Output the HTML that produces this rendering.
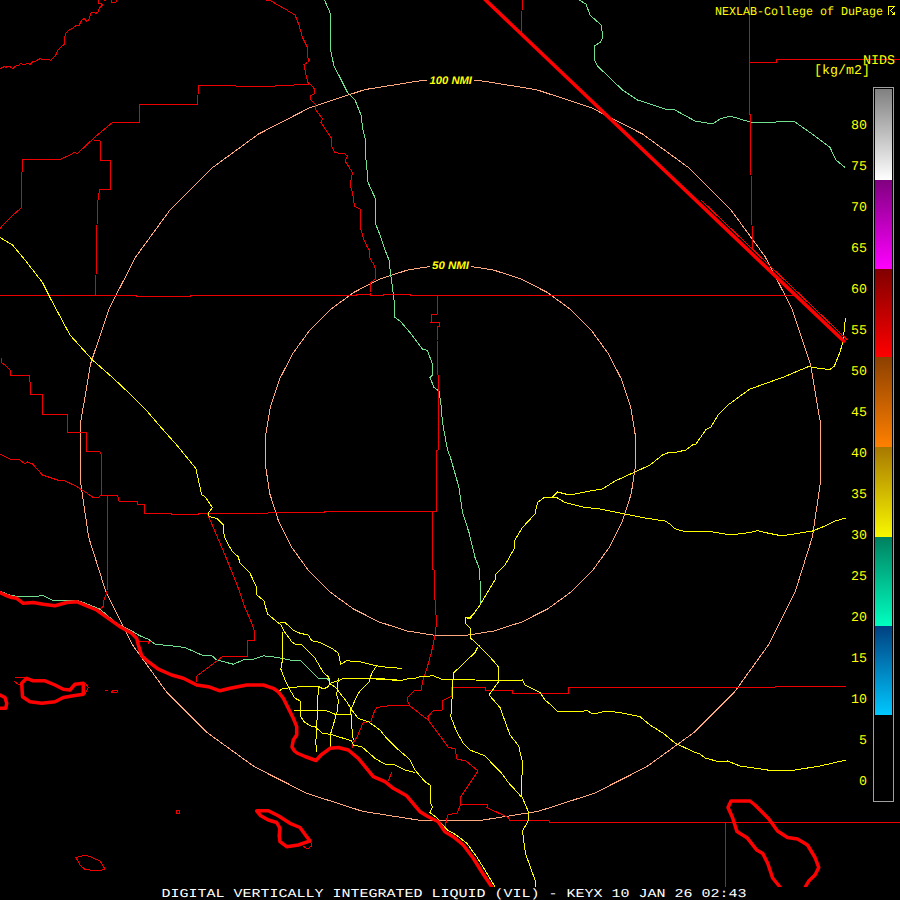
<!DOCTYPE html>
<html><head><meta charset="utf-8"><style>
html,body{margin:0;padding:0;background:#000;width:900px;height:900px;overflow:hidden}
svg{position:absolute;left:0;top:0;display:block}
</style></head><body>
<svg width="900" height="900" viewBox="0 0 900 900" style="text-rendering:geometricPrecision">
<defs><linearGradient id="g0" x1="0" y1="0" x2="0" y2="1"><stop offset="0" stop-color="#808080"/><stop offset="1" stop-color="#ffffff"/></linearGradient><linearGradient id="g1" x1="0" y1="0" x2="0" y2="1"><stop offset="0" stop-color="#800080"/><stop offset="1" stop-color="#ff00ff"/></linearGradient><linearGradient id="g2" x1="0" y1="0" x2="0" y2="1"><stop offset="0" stop-color="#800000"/><stop offset="1" stop-color="#ff0000"/></linearGradient><linearGradient id="g3" x1="0" y1="0" x2="0" y2="1"><stop offset="0" stop-color="#8c4000"/><stop offset="1" stop-color="#ff8000"/></linearGradient><linearGradient id="g4" x1="0" y1="0" x2="0" y2="1"><stop offset="0" stop-color="#a87800"/><stop offset="1" stop-color="#f8f800"/></linearGradient><linearGradient id="g5" x1="0" y1="0" x2="0" y2="1"><stop offset="0" stop-color="#008060"/><stop offset="1" stop-color="#00ffc0"/></linearGradient><linearGradient id="g6" x1="0" y1="0" x2="0" y2="1"><stop offset="0" stop-color="#004080"/><stop offset="1" stop-color="#00c8ff"/></linearGradient></defs>
<rect width="900" height="900" fill="#000"/>
<g shape-rendering="crispEdges">
<path d="M479.29,80.50 L536.17,89.61 L591.02,107.61 L642.52,134.05 L689.43,168.28 L730.61,209.46 L765.05,256.58 L791.88,308.47 L810.42,363.86 L820.17,421.38 L820.83,479.62 L812.36,537.14 L794.90,592.53 L768.85,644.42 L734.83,691.54 L693.65,732.72 L646.32,766.95 L594.04,793.39 L538.11,811.39 L479.95,820.50 L421.05,820.50 L362.89,811.39 L306.96,793.39 L254.68,766.95 L207.35,732.72 L166.17,691.54 L132.15,644.42 L106.10,592.53 L88.64,537.14 L80.17,479.62 L80.83,421.38 L90.58,363.86 L109.12,308.47 L135.95,256.58 L170.39,209.46 L211.57,168.28 L258.48,134.05 L309.98,107.61 L364.83,89.61 L421.71,80.50 L479.29,80.50" stroke="#ffa880" stroke-width="1" fill="none"/>
<path d="M464.98,265.50 L493.58,270.06 L521.14,279.05 L546.99,292.27 L570.49,309.39 L591.08,329.98 L608.25,353.54 L621.57,379.48 L630.70,407.18 L635.42,435.94 L635.58,465.06 L631.19,493.82 L622.32,521.52 L609.20,547.46 L592.14,571.02 L571.55,591.61 L547.94,608.73 L521.89,621.95 L494.06,630.94 L465.14,635.50 L435.86,635.50 L406.94,630.94 L379.11,621.95 L353.06,608.73 L329.45,591.61 L308.86,571.02 L291.80,547.46 L278.68,521.52 L269.81,493.82 L265.42,465.06 L265.58,435.94 L270.30,407.18 L279.43,379.48 L292.75,353.54 L309.92,329.98 L330.51,309.39 L354.01,292.27 L379.86,279.05 L407.42,270.06 L436.02,265.50 L464.98,265.50" stroke="#ffa880" stroke-width="1" fill="none"/>
<rect x="427" y="74" width="47" height="12" fill="#000"/>
<rect x="430" y="259" width="41" height="12" fill="#000"/>
<path d="M324.5,0 L330,12.5 L331,25 L330.5,50 L334,66 L340,77.5 L347.5,92.5 L355,100 L361,115 L362.5,127.5 L365,137.5 L366,160 L367.5,175 L367,180 L372.5,192.5 L375,197.5 L376,225 L380,235 L385,250 L389,260 L390,269 L392.5,287.5 L394,300 L395,317.5 L400,321 L410,332.5 L422.5,349 L427.5,350.5 L433,366 L432.5,375 L430,377.5 L434,387.5 L439,391 L441,405 L442.5,422.5 L447.5,450 L450,456 L459,487.5 L462.5,512.5 L469,532.5 L475,557.5 L479,567.5 L480,580 L480.5,605" stroke="#70e090" stroke-width="1" fill="none" />
<path d="M579,0 L586,4 L590,15 L601,25 L603,37.5 L600,42.5 L594,46 L595,50 L594.5,60 L597.5,66 L622.5,90 L637.5,100 L650,104 L665,109 L675,110 L695,121 L712.5,124 L720,119 L730,116 L750,122 L767.5,123 L785,121 L795,122 L815,136 L830,147.5 L836,160 L845,167.5" stroke="#70e090" stroke-width="1" fill="none" />
<path d="M0,591.3 L11.7,595.8 L25,596.7 L43.3,595.8 L53.3,600.8 L78.3,600.8 L90,605 L100,609.2 L116.7,623.3 L130,630 L140,635.8 L148.3,639.2 L155,644.2 L171.7,645.8 L185,647.5 L201.7,655 L211.7,655.5 L216.7,660 L233.3,664.2 L243.3,660 L253.3,659.2 L263.3,655.8 L271.7,656.7 L281.7,658.3 L290,660 L300,660 L306.7,666.7 L313.3,673.3 L318.3,678.3 L326.7,678.3 L330,681.7" stroke="#70e090" stroke-width="1" fill="none" />
<path d="M0,68.7 L4,66.7 L6,67.3 L8,66.3 L10,66.7 L12.7,68.7 L14.7,66.7 L16.7,65.3 L19.3,65 L20.7,63.3 L23.3,64.4 L28,63.6 L30,64.7 L32.7,61.7 L35.3,61.3 L40,58.7 L42.7,59.3 L48.7,59.3 L50.7,60.4 L56,54.7 L58,50 L60.7,47.3 L64,44.7 L65.3,34 L68,30.7 L72.4,28.4 L76.4,25.3 L79.1,25.3 L81.8,20 L84,18.7 L86.7,21.3 L88.9,19.6 L90.7,13.3 L92.9,12.4 L96.4,13.3 L98.2,11.6 L99.1,8.4 L102.2,5.3 L101.8,3.6 L98.7,3.1 L98.2,0" stroke="#ee0000" stroke-width="1" fill="none" />
<path d="M103.6,0.5 L106.2,0.5 M111.6,0 L112,2.5 L116,2.5 L116.4,0" stroke="#ee0000" stroke-width="1" fill="none" />
<path d="M309,84.5 L294,85 L275,86 L236,86 L198.5,85.5 L197.5,104 L139,104 L139,122 L113,122 L95,137 L77,154 L75,152 L70,155 L61,159 L23,159 L22,172 L21,208 L12,216 L3,225 L0,229" stroke="#ee0000" stroke-width="1" fill="none" />
<path d="M94,140 L100,141 L100,160 L110,160 L110,189 L99.5,189 L98,200 L97,225 L96,275 L95.5,295" stroke="#ee0000" stroke-width="1" fill="none" />
<path d="M266,0 L271,1 L285,9 L295,15 L299,25 L302.5,37.5 L307.5,47.5 L307.5,57.5 L309.5,60 L307.5,62.5 L304,64.5 L306,75 L308,82.5 L311,85 L314.5,89 L314,94 L310.5,96 L311,100 L315,104 L316,110 L322.5,119 L321,122.5 L327.5,132.5 L331,137.5 L331,145 L335,152.5 L345,154 L347.5,156 L345,161 L352.5,172.5 L350,185 L352.5,192.5 L354.5,206 L360,209 L361,215 L360,225 L361,230 L364,240 L367.5,247.5 L370,251 L369.5,257.5 L374,265 L376,271 L375,279 L371,282.5 L370,292.5 L370,295" stroke="#ee0000" stroke-width="1" fill="none" />
<path d="M0,295.5 L136,295.5 L136,296.5 L190,296.5 L190,295.5 L356,295.5 L357,294.5 L370,294.5 L371,295.5 L383,295.5 L384,294.5 L410,294.5 L410.5,295.5 L795,295.5" stroke="#ee0000" stroke-width="1" fill="none" />
<path d="M437,294.5 L437,314 L432,314.5 L431,322.5 L439.5,322.5 L439.5,326 L437,326 L437,340 L438,375 L438,450 L436,450.5 L436,511" stroke="#ee0000" stroke-width="1" fill="none" />
<path d="M101,495 L117.5,495 L119,501 L137.5,501 L137.5,504 L144,504 L144,513.5 L171,513.5 L171.5,514.5 L198.5,514.5 L199,513.5 L268,513.2 L269,512.5 L324,512.5 L325,511.5 L437,511.5" stroke="#ee0000" stroke-width="1" fill="none" />
<path d="M432,511 L432,569 L434,570 L435,600 L436.5,623 L435,635 L431.5,652 L426.5,670 L423,680 L421,690 L415,690 L408,697 L407.5,701 L410,706 L428,720 L438,733 L448,747 L455,749 L457,759 L466,761 L478,771 L460,798 L461,804 L457,813 L448,815 L447,818 L445,827" stroke="#ee0000" stroke-width="1" fill="none" />
<path d="M461,804.5 L487.5,804.5 L487,807.5 L508,817.5 L510,820.5 L548.5,820.5 L550,822.5 L900,822.5" stroke="#ee0000" stroke-width="1" fill="none" />
<path d="M725.5,822.5 L726,887" stroke="#ee0000" stroke-width="1" fill="none" />
<path d="M410,705 L393,705 L377,707.5 L375,710 L373,715 L371,721 L363,723 L360,730 L357,737 L353,743 L352,748" stroke="#ee0000" stroke-width="1" fill="none" />
<path d="M428,720 L428,716.7 L433,711 L442.5,710 L442.5,701 L451.7,696 L451.7,687.5 L485,687.5 L486,690.5 L513,690.5 L512.5,693.5 L568.3,693.5 L568.3,687.5 L775,687 L846,686.5" stroke="#ee0000" stroke-width="1" fill="none" />
<path d="M207.5,514 L225,555 L237.5,586 L245,607.5 L252.5,625 L254,630 L254,640 L247,640 L247,656 L223,656 L217,661 L197,676 L196,682.5" stroke="#ee0000" stroke-width="1" fill="none" />
<path d="M1,357.5 L1,362.5 L5,365 L7.5,367.5 L10,370 L10.5,375.5 L29.5,375.5 L31,394.5 L42.5,394.5 L42.5,414 L67.5,414 L67.5,432 L86,432 L86,451 L100,452 L101,454 L101,495" stroke="#ee0000" stroke-width="1" fill="none" />
<path d="M0,454 L10,459 L20,460 L25,464 L27.5,462 L32.5,464 L42.5,475 L57.5,480 L65,481 L76,486 L86,492.5 L92.5,497 L99,497 L101,495" stroke="#ee0000" stroke-width="1" fill="none" />
<path d="M107.5,495 L107.5,545 L107,592 L103.5,601.5 L104,606 L100,609" stroke="#ee0000" stroke-width="1" fill="none" />
<path d="M522.5,0 L521,32.5" stroke="#ee0000" stroke-width="1" fill="none" />
<path d="M749,0 L749.5,77.5 L750.5,150 L752.5,249" stroke="#ee0000" stroke-width="1" fill="none" />
<path d="M749.5,62.5 L776,62.5 L776,60 L900,59.5" stroke="#ee0000" stroke-width="1" fill="none" />
<path d="M76,857.5 L86,855 L100,861 L105,869 L99,871 L85,869.5 L80,865 Z" stroke="#ee0000" stroke-width="1" fill="none" />
<path d="M176,811 L179,810 L180,813 L177,814 Z" stroke="#ee0000" stroke-width="1" fill="none" />
<path d="M15,677 L25,677.5 M14,681.5 L20,685" stroke="#ee0000" stroke-width="1" fill="none" />
<path d="M85,683 L88.5,687.5 L85,693.5" stroke="#ee0000" stroke-width="1" fill="none" />
<path d="M105,690 L108,690 M111,692 L114,690 L118,691 L116,693 L111,692" stroke="#ee0000" stroke-width="1" fill="none" />
<path d="M138,641.7 L150,641.7 L148,643.3" stroke="#ee0000" stroke-width="1" fill="none" />
<path d="M388,781 L392,772" stroke="#ee0000" stroke-width="1" fill="none" />
<path d="M310,840.8 L312,846 L307,849 L303,846" stroke="#ee0000" stroke-width="1" fill="none" />
<path d="M0,237.5 L12.5,245 L25,260 L42.5,282.5 L50,297.5 L70,335 L92.5,360 L112.5,377.5 L135,398.75 L145,408.75 L163.3,430 L176.7,445 L188.3,459.2 L195.8,468.3 L201.7,495 L205,496.7 L212.5,507.5 L208.3,513.3 L209.2,516.7 L216.7,518.3 L223.3,525 L224.2,536.7 L227.5,543.3 L232.5,551.7 L238.3,556.7 L240,563.3 L250,573.3 L256,586 L256,594 L264,601 L267.5,614 L276,621 L281,625 L283.3,630 L291.7,641.7 L295,644 L301.7,645 L306.7,650 L315,658.3 L320,666.7 L323.3,672.5 L328.3,676.7 L330,680.8 L329,683 L336.7,688.3 L340,693.3 L346.7,701.7 L351.7,710 L358.3,718.3 L368.3,721.7 L380,730 L386.7,738.3 L396.7,748.3 L406.7,756.7 L410,760 L415,770 L425,781.7 L430,785 L430,801.7 L432.5,806.7 L430,812.5 L437.5,818.3 L441,823 L447.5,830 L457,835.5 L467,843.5 L476.5,856.5 L485,870 L495,887" stroke="#ffff00" stroke-width="1" fill="none" />
<path d="M280,622.5 L285,622.5 L293.3,630 L300,633.3 L308.3,635 L311.7,640.8 L320,642.5 L333.3,649.2 L338.3,653.3 L340.8,664.2 L346.7,660.8 L360,661.7 L376.7,665.8 L388.3,667.5 L401.7,668.3" stroke="#ffff00" stroke-width="1" fill="none" />
<path d="M282.5,631.7 L282.5,660 L280.8,669 L285,680 L290,690 L295,698.3 L300,700.8 L300.8,710 L300.8,716.7 L304.2,721.7 L310,725.8 L315,726.7 L322.5,733.3 L330,734.2 L338.3,736.7 L351.7,740.8 L353.3,745 L361.7,746.7 L375,758.3 L385,764.2 L395,765 L405,770 L415,772.5" stroke="#ffff00" stroke-width="1" fill="none" />
<path d="M278.3,691.7 L281.7,689 L291.7,687.5 L300,686.7 L318.3,686.3 L323.3,689 L328.3,686.7 L330,683.3 L340,680 L343.3,678.3 L376.7,678.3 L396.7,680 L403.3,680 L410,678.3 L415,678.3 L420,676.7 L433.3,675.8 L441.7,679.2 L475,680 L518.3,680.8 L522.5,680 L525,685 L533.3,689.2 L540,692.5 L545,700 L550,704.2 L557.5,711.3 L582.5,711.3 L586.7,710.3 L591.7,713.3 L596.7,713.3 L603.3,711.7 L611.7,711.7 L620,712.5 L623.3,713.3 L640,716.7 L650,725 L663.3,733.3 L675,743 L695,752.5 L700,754 L705,758 L720,762 L727.5,761 L740,766 L767.5,770 L795,770 L820,766 L846,760" stroke="#ffff00" stroke-width="1" fill="none" />
<path d="M376,679.3 L403,680.5" stroke="#ffff00" stroke-width="1" fill="none" />
<path d="M294.2,710.3 L306.7,710.5 L316.7,710.8 L326.7,710.8 L335,714.2 L350.8,714.2" stroke="#ffff00" stroke-width="1" fill="none" />
<path d="M318.3,686.7 L317.5,710 L316.7,726.7 L315.8,743.3 L316.7,751.7" stroke="#ffff00" stroke-width="1" fill="none" />
<path d="M338.3,678.3 L337.5,688.3 L336.7,695 L338.3,700 L337.5,710 L333.3,725 L330.8,733.3 L330,743.3 L330,748.3" stroke="#ffff00" stroke-width="1" fill="none" />
<path d="M376.7,665.8 L371.7,673.3 L369.2,681.7 L360,690.8 L355.8,698.3 L350.8,710 L351.7,726.7 L353.3,740" stroke="#ffff00" stroke-width="1" fill="none" />
<path d="M466,617.5 L470,619 L480,605 L495,580 L496,574 L505,565 L514,549 L515,540 L522.5,527.5 L535,514 L537.5,502.5 L544,497.5 L552.5,497 L557.5,498 L565,502.5 L582.5,507 L600,509 L625,514 L645,518 L665,521 L670,524 L675,528.75 L682.5,531 L712.5,532 L725,534 L730,535 L750,532.5 L757.5,530.5 L765,532.5 L780,535.5 L787.5,535 L812.5,531 L825,526 L835,521 L846,518" stroke="#ffff00" stroke-width="1" fill="none" />
<path d="M552.5,497 L557.5,492 L567.5,494.5 L575,494 L590,491 L602.5,489 L615,481 L635,472 L650,465 L662.5,455 L667.5,453 L675,452.5 L686,450 L692.5,445 L696,444 L706,429.6 L711,427 L718,415 L728,405 L737.5,398 L750,389 L767,383 L782.5,377.5 L808.7,366.5 L812.5,367.5 L821,368.5 L829.5,369.7 L834.4,366 L840,352 L843,341.6 L845.4,318.3" stroke="#ffff00" stroke-width="1" fill="none" />
<path d="M476.7,610 L470,617.5 L465,617.5 L465,623.3 L470,628.3 L470.8,638.3 L478.3,645 L488.3,655 L498.3,666.7 L499,681 L489,695 L500,707.5 L510,735 L518.75,746 L522.5,762.5 L521.25,795 L528.75,812.5 L528.75,820 L522.5,831 L525,850 L526,855 L535,880 L536,887.5" stroke="#ffff00" stroke-width="1" fill="none" />
<path d="M477.5,647.5 L475,652.5 L453.3,673.3 L452.5,688.3 L451.7,706.7 L450.8,716.7 L456.7,731.7 L463.3,743.3 L470,750 L485,755.8 L495,766.7 L501.7,773.3 L508.3,782.5 L518.3,793.3 L521,797" stroke="#ffff00" stroke-width="1" fill="none" />
</g>
<g stroke-linejoin="round" stroke-linecap="round">
<path d="M0,592.5 L5,595 L11.7,597.5 L16.7,598.3 L23.3,603.3 L33.3,602.5 L43.3,604.2 L55,605.8 L66.7,602.5 L76.7,601.7 L86.7,605.8 L96.7,610 L108.3,618.3 L120,626.7 L131.7,633.3 L136.7,638.3 L138.3,645 L141.7,655.8 L148.3,661.7 L158.3,669.2 L171.7,675 L183.3,678.3 L196.7,685 L208.3,686.7 L220,690.8 L230,688.3 L246.7,685 L263.3,685 L273.3,688.3 L278.3,691.7 L283.3,698.3 L288.3,708.3 L293.3,718.3 L296.7,726.7 L296.7,735 L293.3,740 L292,747 L294.5,751 L297,753 L305,756.5 L316,760.5 L321,755 L330,748.3 L338.3,747.5 L348.3,750 L358.3,758.3 L373.3,776.7 L385,781.7 L393.3,788.3 L406.7,795.8 L420,811.7 L428.3,816.7 L438.3,821.7 L445,831.7 L453.3,836.7 L463.3,845 L473.3,858.3 L481.7,871.7 L491.7,886.7" stroke="#ff0000" stroke-width="3.5" fill="none" />
<path d="M21.7,683.3 L26.7,678.3 L33.3,680.8 L45,680.8 L55,685 L63.3,689.2 L70,690 L75,684.2 L83.3,683.3 L83.3,694.2 L73.3,695.8 L63.3,697.5 L55,701.7 L41.7,703.3 L30,701.7 L22.5,696.7 Z" stroke="#ff0000" stroke-width="3.5" fill="none" />
<path d="M0,695 L5,697.5 L6.7,703.3 L5.8,708.3 L0,708.3" stroke="#ff0000" stroke-width="3.5" fill="none" />
<path d="M256.7,810.8 L268.3,810.8 L278.3,815.8 L290,823.3 L300,827.5 L306.7,836.7 L310,840.8 L298.3,845 L286.7,846.7 L280,841.7 L279.2,835.8 L280,828.3 L276.7,822.5 L268.3,820 L260.8,815.8 Z" stroke="#ff0000" stroke-width="3.5" fill="none" />
<path d="M805,887.5 L808.75,881 L815,875 L818.75,867.5 L815,857.5 L807.5,845 L797.5,839 L787.5,837.5 L777.5,831 L768.75,818.75 L755,805 L750,801 L731,801 L728,807.5 L732.5,817.5 L737,831.6 L747,837.7 L756.7,850 L762.8,853.6 L767.7,863.3 L772.6,878 L780,887" stroke="#ff0000" stroke-width="3.5" fill="none" />
<path d="M484.5,-1 L845,342.3" stroke="#ff0000" stroke-width="3.6" fill="none" stroke-linecap="butt"/>
<path d="M701,200 L847.5,340" stroke="#ff0000" stroke-width="1" fill="none" stroke-linecap="butt" shape-rendering="crispEdges"/>
</g>
<rect x="873.5" y="87.5" width="20" height="714" fill="#000" stroke="#a0a0a0" stroke-width="1"/>
<rect x="875" y="89" width="17" height="91" fill="url(#g0)"/><rect x="875" y="180" width="17" height="89" fill="url(#g1)"/><rect x="875" y="269" width="17" height="88" fill="url(#g2)"/><rect x="875" y="357" width="17" height="90" fill="url(#g3)"/><rect x="875" y="447" width="17" height="90" fill="url(#g4)"/><rect x="875" y="537" width="17" height="89" fill="url(#g5)"/><rect x="875" y="626" width="17" height="89" fill="url(#g6)"/>
<rect x="0" y="887" width="900" height="13" fill="#000"/>
<g fill="#ffff00" font-family="Liberation Mono" font-size="13.3"><text transform="translate(867,129) scale(1.0,1)" text-anchor="end">80</text><text transform="translate(867,170) scale(1.0,1)" text-anchor="end">75</text><text transform="translate(867,211) scale(1.0,1)" text-anchor="end">70</text><text transform="translate(867,252) scale(1.0,1)" text-anchor="end">65</text><text transform="translate(867,293) scale(1.0,1)" text-anchor="end">60</text><text transform="translate(867,334) scale(1.0,1)" text-anchor="end">55</text><text transform="translate(867,375) scale(1.0,1)" text-anchor="end">50</text><text transform="translate(867,416) scale(1.0,1)" text-anchor="end">45</text><text transform="translate(867,457) scale(1.0,1)" text-anchor="end">40</text><text transform="translate(867,498) scale(1.0,1)" text-anchor="end">35</text><text transform="translate(867,539) scale(1.0,1)" text-anchor="end">30</text><text transform="translate(867,580) scale(1.0,1)" text-anchor="end">25</text><text transform="translate(867,621) scale(1.0,1)" text-anchor="end">20</text><text transform="translate(867,662) scale(1.0,1)" text-anchor="end">15</text><text transform="translate(867,703) scale(1.0,1)" text-anchor="end">10</text><text transform="translate(867,744) scale(1.0,1)" text-anchor="end">5</text><text transform="translate(867,785) scale(1.0,1)" text-anchor="end">0</text></g>
<text transform="translate(715,15) scale(0.972,1)" fill="#ffff00" font-family="Liberation Mono" font-size="12" xml:space="preserve">NEXLAB-College of DuPage</text>
<path d="M888.5,15 V6.5 H894.5 L890.5,10.5 L894.5,14.5 M892,14.5 H894.5 V12" stroke="#ffff00" stroke-width="1" fill="none" shape-rendering="crispEdges"/>
<text transform="translate(863,64) scale(1.0,1)" fill="#ffff00" font-family="Liberation Mono" font-size="13.3">NIDS</text>
<text transform="translate(814,74) scale(1.0,1)" fill="#ffff00" font-family="Liberation Mono" font-size="13.3">[kg/m2]</text>
<text transform="translate(161.5,897) scale(1.25,1)" fill="#ffffff" font-family="Liberation Mono" font-size="12" xml:space="preserve">DIGITAL VERTICALLY INTEGRATED LIQUID (VIL) - KEYX 10 JAN 26 02:43</text>
<g fill="#ffff00" font-family="Liberation Sans" font-weight="bold" font-style="italic" font-size="11">
<text x="429.5" y="84" textLength="42.5" lengthAdjust="spacingAndGlyphs">100 NMI</text>
<text x="432" y="269" textLength="37" lengthAdjust="spacingAndGlyphs">50 NMI</text>
</g>
</svg>
</body></html>
